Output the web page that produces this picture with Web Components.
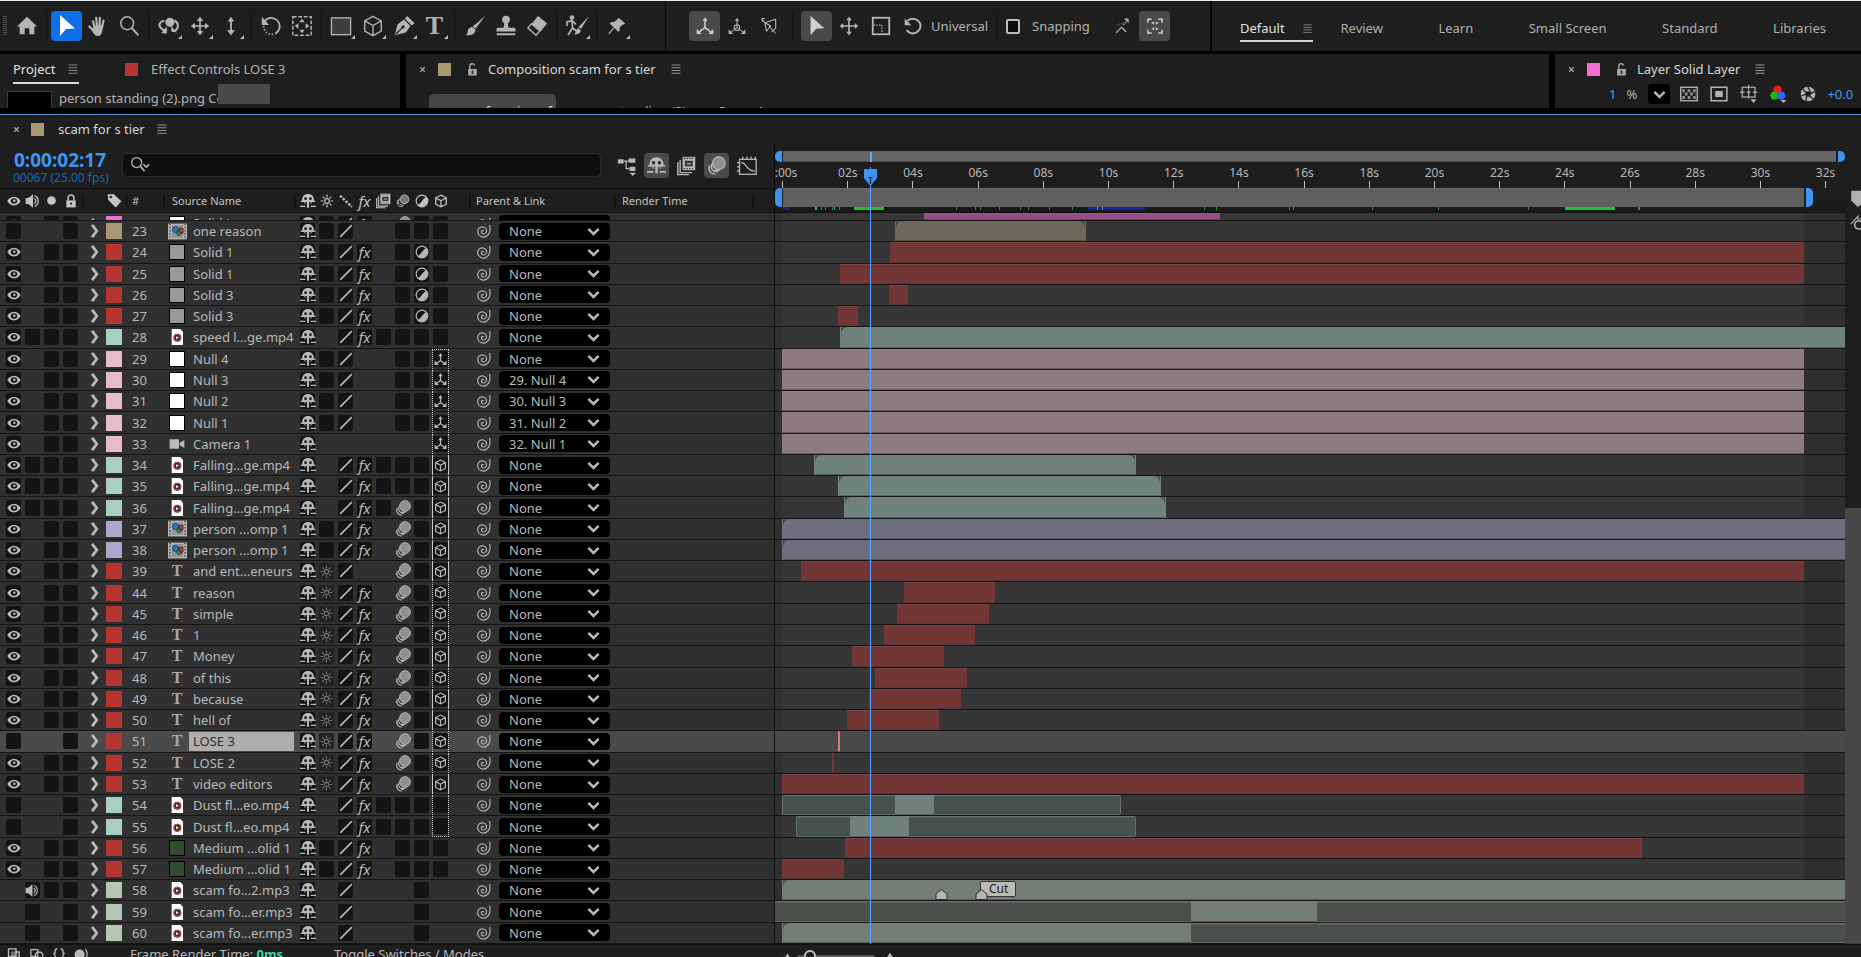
<!DOCTYPE html>
<html lang="en">
<head>
<meta charset="utf-8">
<title>scam for s tier</title>
<style>
html, body { margin: 0; height: 100%; overflow: hidden; background: #000; }
body { font: 13px/16px "Noto Sans", sans-serif; color: #b9b9b9; }
</style>
</head>
<body>
<editor-app></editor-app>
<script>
const line = (d, w = 1.6, extra = '') => `<path d="${d}" fill="none" stroke="currentColor" stroke-width="${w}" ${extra}/>`;
const fill = (d, extra = '') => `<path d="${d}" ${extra}/>`;
const ICONS = {
  home: fill('M12 2L1 12.500h3V21h5.500v-6.500h5V21H20v-8.500h3z'),
  pointer: fill('M5 1v21l6-7 9-.5z'),
  hand: line('M6.500 7l2 7M10 3l1 10M14 3l-.3 10M18 6l-1.700 8M2.500 12.500L8 18', 2.4, 'stroke-linecap="round"') + fill('M7 12l10.500-1-1 7c-.5 3-2 5-4.500 5-3 0-4.500-2.500-6-5z'),
  magnifier: `<circle cx="10" cy="9" r="7" fill="none" stroke="currentColor" stroke-width="1.600"/>` + line('M15 14l7 8', 2.2),
  orbit: `<circle cx="13" cy="8" r="5"/>` + line('M7 6c-5 1-7 5-4 8 1.500 2 4 3 7 2.500M18 6c4 2 5 7 2 10-1 1-3 1.500-5 1', 2.200) + fill('M9.500 12.500v8l-6-1zM14.500 12v6l6 1z'),
  pan: line('M12 4v16M4 12h16', 2) + fill('M12 1l4 5H8zM12 23l4-5H8zM1 12l5-4v8zM23 12l-5-4v8z'),
  dolly: line('M12 4v16', 2.200) + fill('M12 1l4 5.500H8zM12 23l5-6H7z'),
  rotate: line('M5 6.500C11 0 21 4 21.500 12c0 4-2 6.500-5 8.500', 2) + line('M4 12c0 5 4 10 11 9', 2, 'stroke-dasharray="1.500 2"') + fill('M2 2v9h8z'),
  behind: `<rect x="2" y="2" width="20" height="20" fill="none" stroke="currentColor" stroke-width="1.600" stroke-dasharray="4 2"/>` + fill('M12 4l3 4H9zM12 20l3-4H9zM4 12l4-3v6zM20 12l-4-3v6z'),
  rect: `<rect x="1.500" y="3" width="20" height="17.500" fill="#3d3d3d" stroke="currentColor" stroke-width="1.400"/>`,
  cube: line('M12 1.500l9 5v11l-9 5-9-5v-11zM3 6.500l9 5 9-5M12 11.500v11', 1.500),
  pen: fill('M2 22l3-12 7-5 7 7-5 7zM13 4l2.500-3 8 8L20.500 11.500z') + '<path d="M3 21l7-7" stroke="#1e1e1e" stroke-width="1.300"/><circle cx="11" cy="13" r="1.700" fill="#1e1e1e"/>',
  brush: fill('M23 1L12.500 15l-3-2.500zM9 13l3.500 3c0 4-4 7-11 6 3-1.500 2-3 3-6 .7-2 3-3 4.500-3z'),
  stamp: `<circle cx="12" cy="5" r="4.300"/>` + fill('M10.300 8h3.400l1 6H21c1 0 1.500 1 1.500 4h-21c0-3 .5-4 1.500-4h6.300zM2 20h20v2H2z'),
  eraser: fill('M13 1l10 8-7 9-10-8z') + line('M6 9.500l9 8-4 4.500-9-8z', 1.500),
  roto: `<circle cx="7" cy="3.500" r="2.300"/>` + line('M7 6l.5 8L3 21M7.500 14l4 3M2 12V8l5-1.500 4 4', 1.700) + fill('M24 2l-8 13-2.500-2zM13 14l3 2.500c-1 3-3.500 4-7 4 2-1 1.500-5 4-6.500z'),
  pin: fill('M14 2l8 7-2 1.500-1-.5-4 4c1 3 0 4-1.500 5L9 14.500 2.500 22 1.500 21 8 13.500 3 9c1.500-1.500 3-2 5-1.500L12.500 4z'),
  axes: line('M12 5v9L5 19M12 14l7 5', 1.800) + fill('M12 1.500l3 4.500H9zM2 15.500V21.500h6zM22 15.500V21.500h-6z'),
  axesWorld: line('M12 5v9L5 19M12 14l7 5', 1.200) + `<circle cx="12" cy="14" r="3.400" fill="none" stroke="currentColor" stroke-width="1.300"/>` + fill('M12 2l2.500 4h-5zM2 16v5.500h5.500zM22 16v5.500h-5.500z'),
  axesSmall: line('M12 5v9L5 19M12 14l7 5', 2.200) + fill('M12 0l4 6H8zM1 14v8h8zM23 14v8h-8z'),
  axesView: line('M3 3l4 5M7 8l13-4v11l-5 4M7 8l2 10 5-6zM12 12l8 9M4 3v4M3 3h4', 1.300),
  move: line('M12 3v18M3 12h18', 2) + fill('M12 1l3.500 4h-7zM12 23l3.500-4h-7zM1 12l4-3.500v7zM23 12l-4-3.500v7z'),
  scale: `<rect x="3" y="3" width="18" height="18" fill="none" stroke="currentColor" stroke-width="2"/>` + line('M4 11h9v10', 1.300, 'stroke-dasharray="1.500 1.500"'),
  redo: line('M5 6C11 0 21 5 21 12c0 5-5 9-9 9-4 0-6-2-7.500-4', 2.300) + fill('M2 3v8h8z'),
  snapLine: line('M5 20l7-7 6 6', 1.600) + line('M6 10l11-3', 1.200, 'stroke-dasharray="1 2"') + line('M14 10l6-6', 1.500, 'stroke-dasharray="2 1.500"') + fill('M21 2v6l-6-6z'),
  snapBox: line('M8 4H3.500v4M16 4h4.500v4M8 20.500H3.500v-4M16 20.500h4.500v-4', 1.800) + fill('M7.500 8l3.500-1v3.500zM16.500 8L13 7v3.500zM7.500 16l3.500 1v-3.500zM16.500 16l-3.500 1v-3.500z'),
  menu: line('M3 4h18M3 9.500h18M3 15h18M3 20.500h18', 1.700),
  close: line('M6 6l12 12M18 6L6 18', 3),
  lock: fill('M4 11h16v12H4z') + line('M7 11V7c0-7 10-7 10 0v4', 2.600) + '<circle cx="12" cy="16.500" r="1.800" fill="#1e1e1e"/>',
  unlock: fill('M4 11h16v12H4z') + line('M7 11V6c0-6 8-6 9-1', 2.400) + '<path d="M10.500 14h3v6h-3z" fill="#1e1e1e"/>',
  search: `<circle cx="8" cy="9" r="6" fill="none" stroke="currentColor" stroke-width="1.500"/>` + line('M12.500 13.500l5 6', 2) + line('M16 11l3.500 3.500L23 11', 1.800),
  down: line('M2.500 7l9.500 9.500L21.500 7', 4.500),
  right: line('M7 1.500l8 10.500-8 10.500', 4.800),
  eye: fill('M12 4.500C6 4.500 2.500 8.500.5 12c2 3.500 5.500 7.500 11.500 7.500S21.500 15.500 23.500 12c-2-3.500-5.500-7.500-11.500-7.500zm0 2.700c3.500 0 5.500 2 5.500 4.800s-2 4.800-5.500 4.800S6.500 14.800 6.500 12 8.500 7.200 12 7.200z', 'fill-rule="evenodd"') + '<circle cx="12.500" cy="11.500" r="2.200"/>',
  audio: fill('M1 7.500h4L12 2v20l-7-5.500H1z') + line('M14 8c3 2 3 6 0 8M14.500 4c7 3 7 13 0 16', 1.900),
  dot: '<circle cx="12" cy="12" r="8"/>',
  tag: fill('M1 2h10l12 11-9 10L2 11zM6 4.500a2 2 0 100 4 2 2 0 000-4z', 'fill-rule="evenodd"'),
  shy: fill('M3 12C3 5 6.500 1.500 12 1.500S21 5 21 12z') + '<ellipse cx="8.300" cy="8.500" rx="2" ry="2.200" fill="#1c1c1c"/><ellipse cx="15.700" cy="8.500" rx="2" ry="2.200" fill="#1c1c1c"/>' + line('M1 12.500h22', 2) + line('M12 12v10', 3) + line('M0 20h8M16 20h8', 2) + line('M7.500 13v3M16.500 13v3', 1.500),
  sun: `<circle cx="12" cy="12" r="4" fill="none" stroke="currentColor" stroke-width="2"/>` + line('M12 1v5M12 18v5M1 12h5M18 12h5M4.500 4.500l3 3M16.500 16.500l3 3M19.500 4.500l-3 3M4.500 19.500l3-3', 2),
  slash: line('M2 22L22 2', 2.800),
  quality: line('M2 3L22 22', 4, 'stroke-dasharray="4 2.500"'),
  blend: fill('M7 1h16v17H7z') + line('M4 5v16h15M1 8v15.500h14', 1.800) + '<path d="M8.500 3h13M8.500 16h13" stroke="#222" stroke-width="1.300" stroke-dasharray="1.800 1.500"/><path d="M10 6h10v7H10z" fill="#333"/><path d="M12.500 9h5v1.500h-5z"/>',
  blur: '<circle cx="15" cy="9" r="8" fill="#8f8f8f" stroke="currentColor" stroke-width="1.500"/>' + line('M6.500 9.500c-3 5 1 11 7 10.500M3.500 12c-3 5 1.500 11 7 10.500M9.500 17.500c2 1 5 1 7 0', 1.700),
  blurOutline: '<circle cx="14.500" cy="9" r="7.500" fill="#777" stroke="currentColor" stroke-width="1.500"/>' + line('M5.500 8c-3.500 6 1 12.500 8 11M2.500 11c-2 6 3 12 9 10.500', 1.600),
  adjust: '<circle cx="12" cy="12" r="10" fill="none" stroke="currentColor" stroke-width="2"/>' + fill('M19 4.500A10.500 10.500 0 014.500 19.500L10 14.500 14 9.500z'),
  cube3d: line('M12 2l9 4.500v11L12 22l-9-4.500v-11zM3 6.500l9 5 9-5M12 11.500V22', 2.200),
  spiral: line('M13 12.500c0-2-3-2-3.500.5-.5 3 3.500 4.500 6 2.500 3.500-3 2-8.500-3-9.500C6.500 5 3.500 9.500 4 14c1 6 8 9 13 6 5-3 6.500-9 5-17', 1.700),
  flow: fill('M1 4h7v5H1zM14 3h8v5h-8zM15 13h7v5h-7zM15 20h8l-4 4z') + line('M8 6h6M11 6v9h4', 1.500),
  graph: `<rect x="3" y="4" width="20" height="18" fill="none" stroke="currentColor" stroke-width="1.500"/>` + line('M5 8c7 0 6 10 16 10M0 8h3M0 13h3M0 18h3M7 1v3M12 1v3M17 1v3M22 1v3', 1.600),
  camera: fill('M1 5h14v14H1zM16 10l7-4v12l-7-4z'),
  file: '<path d="M4 0h13l4 4v20H4z" fill="#fff"/><circle cx="12.500" cy="13" r="6" fill="#3b2530"/><circle cx="12.500" cy="13" r="5" fill="none" stroke="#c9693d" stroke-width="1.200"/><path d="M10.500 10.500v5l4.500-2.500z" fill="#dfe8ff"/>',
  comp: '<path d="M0 2h24v20H0z" fill="#b4b4b4"/><path d="M2.500 2v20M21.500 2v20" stroke="#555" stroke-width="2" stroke-dasharray="2 2"/><path d="M5 4h14v16H5z" fill="#8c9499"/><circle cx="9.500" cy="9.500" r="3.800" fill="#267ac4" stroke="#15324d"/><circle cx="14" cy="14" r="3" fill="#38945a" stroke="#173524"/><path d="M14 8h5v6h-4z" fill="#c24133" stroke="#4a1512"/>',
  checker: `<rect x="1" y="3" width="22" height="18" fill="none" stroke="currentColor" stroke-width="1.800"/>` + line('M3 7.500h18M6.500 12h15M3 16.500h18', 4, 'stroke-dasharray="3.600 3.600" opacity=".75"'),
  mask: `<rect x="1.500" y="3" width="21" height="18" fill="none" stroke="currentColor" stroke-width="2"/><rect x="7" y="8" width="10" height="8"/>`,
  region: `<rect x="3" y="3" width="17" height="13" fill="none" stroke="currentColor" stroke-width="1.600"/>` + line('M11.500 0v6M11.500 12v6M0 9.500h6M17 9.500h6M9 9.500h5M11.500 7v5', 1.500) + fill('M14 19h8l-4 5z'),
  rgb: '<circle cx="10" cy="6" r="5.500" fill="#f01810"/><circle cx="6" cy="14" r="5.500" fill="#18b818"/><circle cx="15" cy="14" r="5.500" fill="#3565f0"/>' + fill('M14 20h8l-4 4z'),
  aperture: '<circle cx="12" cy="12" r="11"/><circle cx="12" cy="12" r="4" fill="#1e1e1e"/><path d="M12 1l4 9M22 8l-8 5M20 20l-7-6M9 23l1-9M2 15l8-3M4 4l6 7" stroke="#1e1e1e" stroke-width="2"/>',
  bin: fill('M3 1h18v13l-9 9-9-9z'),
  mountains: fill('M0 21l6-8 3 3 6-9 9 14z'),
  key: line('M1 14L12 2v7', 1.800) + `<circle cx="13" cy="15" r="6" fill="none" stroke="currentColor" stroke-width="2.500"/>` + fill('M14 5h10v12h-5z'),
  collapse: line('M4 3h12v12H4zM8 15v6h13V8h-5', 2.200) + fill('M8 7h9v10H8z', 'opacity=".5"'),
  rings: line('M3 4h11v11H3z', 2) + '<circle cx="16" cy="14" r="6" fill="none" stroke="currentColor" stroke-width="2.200"/>',
  braces: line('M9 3c-4 0-4 3-4 8H2c4 0 3 8 6 8M15 3c4 0 4 3 4 8h3c-4 0-3 8-6 8', 2.200),
  render: '<circle cx="9" cy="12" r="8"/>' + line('M18 3c4 4 4 12 0 17', 2)
};

class AeIcon extends HTMLElement {
  connectedCallback() {
    if (!this.shadowRoot) this.attachShadow({ mode: 'open' });
    const s = this.getAttribute('size') || 16;
    this.shadowRoot.innerHTML = `<style>:host{display:inline-flex;flex:none;width:${s}px;height:${s}px}svg{display:block;width:100%;height:100%;overflow:visible;fill:currentColor}</style><svg viewBox="0 0 24 24" aria-hidden="true">${ICONS[this.getAttribute('name')]}</svg>`;
  }
}
const icon = (name, size = 16) => `<ae-icon name="${name}" size="${size}"></ae-icon>`;

class View extends HTMLElement {
  connectedCallback() {
    if (this.shadowRoot) return;
    this.attachShadow({ mode: 'open' }).innerHTML = `<style>*{box-sizing:border-box}button{font:inherit;color:inherit;background:none;border:0;padding:0;margin:0}${this.css()}</style>${this.html()}`;
  }
}

class ToolBar extends View {
  css() { return `
    :host{display:flex;flex:none;height:51px;background:#1e1e1e;border-top:1px solid #e6efeb;color:#b4b4b4}
    nav{display:flex;align-items:center;width:666px;padding-left:3px;border-right:1px solid #0b0b0b}
    .grip{width:4px;height:20px;background:repeating-linear-gradient(#555 0 1px,transparent 1px 2px)}
    button{position:relative;display:flex;align-items:center;justify-content:center;width:31px;height:30px;border-radius:4px}
    .home{margin-left:4px}
    .more::after{content:"";position:absolute;right:2px;bottom:2px;border:2px solid transparent;border-right-color:#bbb;border-bottom-color:#bbb}
    .on{background:#4a4a4a;color:#d0d0d0}.blue{background:#0f6fe8;color:#fff}
    i{width:1px;height:28px;background:#111;margin:0 4px}
    .t{font:26px/24px "Liberation Serif",serif;font-weight:bold}
    .axis{width:546px;padding-left:23px;gap:1px;border-right:2px solid #050505}
    .axis i{margin:0 7px}
    span,label{white-space:nowrap}
    .axis span{width:58px;margin-left:2px}
    label{display:flex;align-items:center;gap:12px;width:99px}
    input{appearance:none;width:14px;height:15px;margin:0;border:2px solid #bdbdbd;border-radius:2px;background:#0c0c0c}
    .last{margin-left:1px}
    .spaces{flex:1;width:auto;border:0;justify-content:space-between;padding:4px 35px 0 28px}
    a{color:#b0b0b0;text-decoration:none;display:flex;align-items:center;height:28px;white-space:nowrap}
    a.cur{color:#e2e2e2;border-bottom:2px solid #d4d4d4;padding-top:2px;justify-content:space-between;width:73px;margin-right:-28px}
    a.cur ae-icon{color:#999}`; }
  html() {
    const b = (n, l, c = '', s = 22) => `<button type="button" class="${c}" aria-label="${l}">${icon(n, s)}</button>`;
    return `<nav aria-label="Tools"><div class="grip"></div>${b('home', 'Home', 'home', 22)}<i></i>
    ${b('pointer', 'Selection', 'blue', 24)}${b('hand', 'Hand')}${b('magnifier', 'Zoom')}<i></i>
    ${b('orbit', 'Orbit camera', 'more')}${b('pan', 'Pan camera', 'more', 20)}${b('dolly', 'Dolly camera', 'more', 20)}<i></i>
    ${b('rotate', 'Rotation')}${b('behind', 'Pan behind')}<i></i>
    ${b('rect', 'Rectangle', 'more', 23)}${b('cube', '3D shape', 'more')}${b('pen', 'Pen', 'more')}<button type="button" class="more t">T</button><i></i>
    ${b('brush', 'Brush')}${b('stamp', 'Clone stamp')}${b('eraser', 'Eraser')}<i></i>${b('roto', 'Roto brush', 'more', 24)}<i></i>${b('pin', 'Puppet pin', 'more', 20)}</nav>
    <nav class="axis" aria-label="Axis modes">${b('axes', 'Local axis', 'on', 20)}${b('axesWorld', 'World axis', '', 20)}${b('axesView', 'View axis', '', 20)}<i></i>
    ${b('pointer', 'Universal', 'on', 22)}${b('move', 'Move', '', 20)}${b('scale', 'Scale', '', 22)}${b('redo', 'Rotate', '', 20)}<span>Universal</span><i></i>
    <label><input type="checkbox">Snapping</label>${b('snapLine', 'Snap to edges', '', 19)}${b('snapBox', 'Snap to features', 'on last', 20)}</nav>
    <nav class="spaces" aria-label="Workspaces"><a class="cur" href="#default">Default${icon('menu', 11)}</a><a href="#review">Review</a><a href="#learn">Learn</a><a href="#small">Small Screen</a><a href="#standard">Standard</a><a href="#libraries">Libraries</a></nav>`;
  }
}

class ColorSwatch extends View {
  css() { return `:host{display:block;flex:none;width:13px;height:13px;background:${this.getAttribute('color')}}`; }
  html() { return ''; }
}

class PanelRow extends View {
  css() { return `
    :host{display:flex;flex:none;gap:6px;height:54px;margin:3px 0 6px;color:#b4b4b4}
    section{background:#1e1e1e;overflow:hidden;white-space:nowrap}
    .project{flex:0 0 400px}.comp{flex:1;min-width:0}.layer{flex:0 0 306px}
    header{display:flex;align-items:center;height:30px}
    .tab{display:flex;align-items:center;justify-content:space-between;width:66px;height:27px;margin:2px 46px 0 13px;border-bottom:2px solid #ddd;color:#e0e0e0}
    .tab ae-icon{color:#999}
    .project color-swatch{margin-right:13px}
    .comp header,.layer header{padding-left:12px;color:#d8d8d8}
    header ae-icon{color:#aaa}
    .gap{display:flex;margin:0 15px 0 11px}
    .title{margin:0 14px 0 9px}
    .item{display:flex;align-items:flex-start;padding-left:7px}
    .thumb{width:45px;height:18px;margin:7px 7px 0 0;background:#000;border:1px solid #3a3a3a}
    .name{width:159px;overflow:hidden;padding-top:6px}
    .chip{width:52px;height:20px;background:#4a4a4a}
    .crumbs{display:flex;padding:10px 0 0 23px}
    .crumbs button{width:127px;height:34px;border-radius:5px;background:#474747;text-align:right;padding-right:4px;margin-right:12px;color:#ddd}
    .crumbs span{padding-top:9px}
    .opts{display:flex;align-items:center;height:20px;padding-left:54px}
    .opts b{font-weight:normal;color:#4a9cf0}
    .opts span{width:19px;margin:0 3px 0 10px}
    .opts .dd{display:flex;align-items:center;justify-content:center;width:22px;height:20px;background:#000;border-radius:3px;margin-right:10px}
    .opts .ic{display:flex;width:30px}
    .opts .ap{width:27px}`; }
  html() { return `
    <section class="project"><header><div class="tab">Project${icon('menu', 12)}</div><color-swatch color="#b33632"></color-swatch>Effect Controls LOSE 3</header>
    <div class="item"><div class="thumb"></div><div class="name">person standing (2).png Co</div><div class="chip"></div></div></section>
    <section class="comp"><header>${icon('close', 9)}<span class="gap"><color-swatch color="#a89873"></color-swatch></span>${icon('unlock', 13)}<span class="title">Composition scam for s tier</span>${icon('menu', 12)}</header>
    <div class="crumbs"><button type="button">function of</button><span>person standing (2).png Comp 1</span></div></section>
    <section class="layer"><header>${icon('close', 9)}<span class="gap"><color-swatch color="#f06fd0"></color-swatch></span>${icon('unlock', 13)}<span class="title">Layer Solid Layer</span>${icon('menu', 12)}</header>
    <div class="opts"><b>1</b><span>%</span><button type="button" class="dd" aria-label="Magnification">${icon('down', 13)}</button>
    <div class="ic">${icon('checker', 18)}</div><div class="ic">${icon('mask', 18)}</div><div class="ic">${icon('region', 18)}</div><div class="ic">${icon('rgb', 18)}</div><div class="ic ap">${icon('aperture', 16)}</div><b>+0.0</b></div></section>`; }
}

const C = {
  red: ['#b33632', '#733636', '#8b4a45'], sand: ['#a89873', '#70685a', '#4c483f'], mint: ['#a9cfc5', '#6f827d', '#46524e'],
  pink: ['#e6bccb', '#8e7b80', '#6a5c60'], lav: ['#aaa8cd', '#6f6e7e', '#474650'], sage: ['#b3c9b4', '#757e74', '#4c4f4b'], mag: ['#f06fd0', '#954f85', '#6a3a60']
};
const T = 'e.bb', TX = 'so/f.mbc', S = 'sb/f.bab', N = 'sb/..bbx';
// number, label, source icon, name, a/v switches, layer switches, parent, [start, end, kind] bars on a 1070-unit view, column outline
const LAYERS = [
  [22, 'mag', 'white', 'Solid Layer', T, 'sb/f.mbb', 'None', [[149, 445]]],
  [23, 'sand', 'comp', 'one reason', 'b..b', 'sb/..bbb', 'None', [[120, 311, 'both']]],
  [24, 'red', 'grey', 'Solid 1', T, S, 'None', [[115, 1029]]],
  [25, 'red', 'grey', 'Solid 1', T, S, 'None', [[65, 1029]]],
  [26, 'red', 'grey', 'Solid 3', T, S, 'None', [[114, 133]]],
  [27, 'red', 'grey', 'Solid 3', T, S, 'None', [[63, 83]]],
  [28, 'mint', 'file', 'speed l...ge.mp4', 'ebbb', 's./fbbbb', 'None', [[65, 1070, 'start']]],
  [29, 'pink', 'white', 'Null 4', T, N, 'None', [[7, 1029]], 'dot top'],
  [30, 'pink', 'white', 'Null 3', T, N, '29. Null 4', [[7, 1029]], 'dot'],
  [31, 'pink', 'white', 'Null 2', T, N, '30. Null 3', [[7, 1029]], 'dot'],
  [32, 'pink', 'white', 'Null 1', T, N, '31. Null 2', [[7, 1029]], 'dot'],
  [33, 'pink', 'camera', 'Camera 1', T, 's......x', '32. Null 1', [[7, 1029]], 'dot'],
  [34, 'mint', 'file', 'Falling...ge.mp4', 'ebbb', 's./fbbbc', 'None', [[39, 361, 'both']], 'solid'],
  [35, 'mint', 'file', 'Falling...ge.mp4', 'ebbb', 's./fbbbc', 'None', [[63, 386, 'both']], 'solid'],
  [36, 'mint', 'file', 'Falling...ge.mp4', 'ebbb', 's./fbmbc', 'None', [[69, 391, 'both']], 'solid'],
  [37, 'lav', 'comp', 'person ...omp 1', T, 'sb/f.mbc', 'None', [[7, 1070, 'start']], 'solid'],
  [38, 'lav', 'comp', 'person ...omp 1', T, 'sb/f.mbc', 'None', [[7, 1070, 'start']], 'solid'],
  [39, 'red', 'text', 'and ent...eneurs', T, 'so/..mbc', 'None', [[26, 1029]], 'solid'],
  [44, 'red', 'text', 'reason', T, TX, 'None', [[129, 220]], 'dot'],
  [45, 'red', 'text', 'simple', T, TX, 'None', [[122, 214]], 'dot'],
  [46, 'red', 'text', '1', T, TX, 'None', [[109, 200]], 'dot'],
  [47, 'red', 'text', 'Money', T, TX, 'None', [[77, 169]], 'solid'],
  [48, 'red', 'text', 'of this', T, TX, 'None', [[100, 192]], 'dot'],
  [49, 'red', 'text', 'because', T, TX, 'None', [[94, 186]], 'solid'],
  [50, 'red', 'text', 'hell of', T, TX, 'None', [[72, 164]], 'solid'],
  [51, 'red', 'text', 'LOSE 3', 'b..b', TX, 'None', [[63, 65, 'hot']], 'dot'],
  [52, 'red', 'text', 'LOSE 2', T, TX, 'None', [[57, 59]], 'dot'],
  [53, 'red', 'text', 'video editors', T, TX, 'None', [[7, 1029]], 'solid'],
  [54, 'mint', 'file', 'Dust fl...eo.mp4', 'b..b', 's./fbbbb', 'None', [[7, 120, 'dim first'], [120, 159], [159, 346, 'dim last']], 'dot'],
  [55, 'mint', 'file', 'Dust fl...eo.mp4', 'b..b', 's./fbbbb', 'None', [[21, 75, 'dim first'], [75, 134], [134, 361, 'dim last']], 'dot bottom'],
  [56, 'red', 'green', 'Medium ...olid 1', T, 'sb/f.bbb', 'None', [[70, 867]]],
  [57, 'red', 'green', 'Medium ...olid 1', T, 'sb/f.bbb', 'None', [[7, 69]]],
  [58, 'sage', 'file', 'scam fo...2.mp3', '.abb', 's./...b.', 'None', [[7, 1070, 'start']]],
  [59, 'sage', 'file', 'scam fo...er.mp3', '.b.b', 's./...b.', 'None', [[0, 416, 'dim'], [416, 542], [542, 1070, 'dim']]],
  [60, 'sage', 'file', 'scam fo...er.mp3', '.b.b', 's./...b.', 'None', [[7, 416, 'start'], [416, 1070, 'dim']]]
];
const SELECTED = 51;

class LayerTable extends View {
  css() { return `
    :host{display:block;min-height:0;color:#b9b9b9}
    table{display:grid;grid-template-rows:25px minmax(0,1fr);height:100%}
    thead,tbody{display:grid}
    tbody{grid-template-rows:8px repeat(34,minmax(0,1fr));min-height:0}
    tr{display:grid;grid-template-columns:15px 15px 15px 15px 20px 16px 39px 16px 107px repeat(8,15px) 43px 111px 1fr;column-gap:4px;padding-left:6px;align-items:center;min-height:0}
    tbody tr{background:#303030;border-bottom:1px solid #151515}
    tbody tr:first-child{overflow:hidden;align-items:end}
    tbody tr.sel{background:#4a4a4a}
    th,td{display:flex;align-items:center;justify-content:center;padding:0;white-space:nowrap;font-weight:normal;min-width:0}
    thead tr{background:#1e1e1e;border-top:1px solid #111;border-bottom:1px solid #111}
    thead th{height:22px;font-size:11px;color:#c4c4c4}
    thead .l{justify-content:flex-start;border-left:2px solid #131313;height:14px}
    .hn{padding-left:4px}.hs{grid-column:8/10;margin:0 0 0 -6px;padding-left:7px;border-right:2px solid #131313}
    .hp{grid-column:18/20;margin-left:17px;padding-left:5px}.hr{width:140px;padding-left:6px;border-right:2px solid #131313}
    thead .hc{border-left:2px solid #131313;height:14px}
    button{display:flex;align-items:center;justify-content:center;width:15px;height:16px;border-radius:2px}
    .box{background:#141414}.dimsun{color:#777;background:#222}
    button.fx,thead th.fx{font:italic 15px/16px "Noto Sans",sans-serif}
    .exp{justify-content:flex-end}
    .num{justify-content:flex-start;padding-left:6px}
    .name{justify-content:flex-start;padding-left:4px;height:19px}
    .sel .name{background:#adadad;color:#303030;margin-right:2px}
    .t{font:bold 16px/16px "Liberation Serif",serif;color:#a8a8a8}
    .src{width:16px;height:16px;border:1px solid #000}
    .out{align-self:stretch;margin:0 -1px;border:0 dotted #c8c8c8;border-width:0 1px}
    .out.solid{border-style:solid}.out.top{border-top-width:1px}.out.bottom{border-bottom-width:1px}
    .whip{justify-content:flex-end;padding-right:4px}
    .par{position:relative}
    select{appearance:none;width:111px;height:17px;font:inherit;line-height:16px;color:inherit;background:#000;border:0;border-radius:4px;padding:0 24px 0 10px;margin:0}
    .par ae-icon{position:absolute;right:10px;top:2px;pointer-events:none}`; }
  cell(c) {
    const box = (i, l, k = 'box') => `<button type="button" class="${k}" aria-label="${l}">${i}</button>`;
    switch (c) {
      case 'e': return box(icon('eye', 14), 'Video');
      case 'a': return box(icon('audio', 15), 'Audio');
      case 'b': return box('', 'Switch');
      case 's': return box(icon('shy', 16), 'Shy');
      case 'o': return box(icon('sun', 13), 'Collapse', 'dimsun');
      case '/': return box(icon('slash', 14), 'Quality');
      case 'f': return `<button type="button" class="box fx">fx</button>`;
      case 'm': return box(icon('blur', 16), 'Motion blur', '');
      case 'a2': return box(icon('adjust', 14), 'Adjustment layer');
      case 'c': return box(icon('cube3d', 13), '3D layer');
      case 'x': return box(icon('axesSmall', 13), '3D layer');
      default: return '';
    }
  }
  source(k) {
    const solid = { white: '#fff', grey: '#999', green: '#314c2e' }[k];
    if (solid) return `<span class="src" style="background:${solid}"></span>`;
    return k === 'text' ? '<span class="t">T</span>' : icon(k, { comp: 19, file: 16, camera: 16 }[k]);
  }
  html() {
    const th = n => `<th>${icon(n, 14)}</th>`;
    const rows = LAYERS.map(([n, lab, src, name, av, sw, par, , out]) => `<tr class="${n === SELECTED ? 'sel' : ''}">
      ${[...av].map(c => `<td>${this.cell(c)}</td>`).join('')}<td class="exp">${icon('right', 14)}</td><td><color-swatch style="width:16px;height:16px" color="${C[lab][0]}"></color-swatch></td><td class="num">${n}</td><td>${this.source(src)}</td><td class="name">${name}</td>
      ${[...sw].map((c, i) => `<td class="${i === 7 && out ? 'out ' + out : ''}">${this.cell(i === 6 && c === 'a' ? 'a2' : c)}</td>`).join('')}
      <td class="whip">${icon('spiral', 16)}</td><td class="par"><select aria-label="Parent of layer ${n}"><option>${par}</option></select>${icon('down', 13)}</td><td></td></tr>`).join('');
    return `<table><thead><tr><th>${icon('eye', 14)}</th><th>${icon('audio', 16)}</th><th>${icon('dot', 13)}</th><th>${icon('lock', 14)}</th><th class="hc"></th><th>${icon('tag', 15)}</th><th class="l hn">#</th><th class="l hs">Source Name</th>
      <th>${icon('shy', 16)}</th>${th('sun')}${th('quality')}<th class="fx">fx</th><th>${icon('blend', 15)}</th>${th('blurOutline')}${th('adjust')}${th('cube3d')}<th class="l hp">Parent &amp; Link</th><th class="l hr">Render Time</th></tr></thead><tbody>${rows}</tbody></table>`;
  }
}

const UNITS = 1070;
const pct = n => `calc(100% * ${n} / ${UNITS})`;
const flowBars = (list, paint) => {
  let at = 0;
  return list.map(([a, b, kind = '']) => {
    const s = `<span class="${kind}" style="margin-left:${pct(a - at)};width:${pct(b - a)};${paint(kind)}"></span>`;
    at = b; return s;
  }).join('');
};

class TimeRuler extends View {
  css() { return `
    :host{display:block;height:70px;padding-top:8px;background:#1e1e1e;font-size:12px}
    .nav,.work{display:flex}
    .nav{height:11px}.work{height:19px}
    .nav b,.work b{flex:none;background:#3f93f2;width:7px}
    .nav b:first-child,.work b:first-child{border-radius:5px 0 0 5px;margin-right:1px}
    .nav b:last-child,.work b:last-child{border-radius:0 5px 5px 0;margin-left:2px}
    .nav p{flex:1;margin:0;background:#666;border-bottom:1px solid #4d4d4d}
    .work p{flex:none;margin:0;background:#606060;border-top:1px solid #6a6a6a;width:${pct(1021)}}
    .labels{display:flex;height:26px;overflow:hidden;color:#b8b8b8}
    .labels div{flex:none;display:flex;flex-direction:column;align-items:center;justify-content:space-between;width:calc(100% * 652 / 10700);padding-top:3px}
    .labels div:first-child{margin-left:${pct(-25)}}
    .labels i{width:1px;height:7px;background:#c0c0c0}
    .cache{display:flex;height:6px;padding-bottom:2px;background:#191919;border-bottom:1px solid #111}
    .cache span{flex:none;min-width:1px}`; }
  html() {
    const g = '#1fa32a', c = '#35b59a', b = '#1522a8';
    const marks = [[8, 15, '#25256a'], [40, 42, c], [46, 47, g], [50, 51, g], [57, 58, g], [59, 60, c], [64, 65, g], [79, 109, '#1fc42c'], [181, 182, g], [200, 201, g], [205, 206, g], [224, 225, g], [245, 246, g], [253, 254, g], [274, 275, g], [297, 298, g], [313, 322, b], [322, 323, c], [323, 327, b], [327, 328, c], [328, 370, b], [429, 430, g], [441, 442, g], [514, 515, g], [518, 519, g], [597, 598, g], [663, 664, g], [753, 754, g], [790, 840, '#1fc42c'], [863, 865, g]];
    const labels = Array.from({ length: 17 }, (_, i) => `<div>${i ? String(i * 2).padStart(2, '0') + 's' : '0:00s'}<i></i></div>`).join('');
    return `<div class="nav"><b></b><p></p><b></b></div><div class="labels">${labels}</div><div class="work"><b></b><p></p><b></b></div><div class="cache">${flowBars(marks, k => 'background:' + k)}</div>`;
  }
}

class TrackArea extends View {
  css() { return `
    :host{display:grid;grid-template-rows:8px repeat(34,minmax(0,1fr));min-height:0}
    .row{display:flex;min-height:0;border-bottom:1px solid #151515;background:linear-gradient(90deg,#303030 ${pct(8)},#363636 ${pct(8)} ${pct(1029)},#2f2f2f ${pct(1029)})}
    .row.sel{background:#4a4a4a}
    .row>span{flex:none;background:var(--c);box-shadow:inset 0 -1px rgba(60,60,60,.5),inset 0 1px rgba(150,150,150,.15)}
    .row>.dim{background:var(--d);border:0 solid #66716d;border-width:1px 0}
    .row>.first{border-left-width:1px;border-radius:2px 0 0 2px}.row>.last{border-right-width:1px;border-radius:0 2px 2px 0}
    .row>.start,.row>.both{background:var(--d);border-left:1px solid var(--c)}
    .row>.both{border-right:1px solid var(--c)}
    .start::after,.both::after{content:"";display:block;height:100%;background:var(--c);border-top-left-radius:7px;box-shadow:inset 0 -1px rgba(60,60,60,.5)}
    .both::after{border-top-right-radius:7px}
    .row>.hot{background:#d97a70}
    .row.marks{position:relative}
    .mk{position:absolute;bottom:0;width:13px;height:11px;fill:#b5b8b2;stroke:#333;margin-left:-6px}
    .cut{position:absolute;top:1px;height:16px;width:36px;border:1px solid #333;border-radius:2px;background:#b9bcb7;color:#222;font-size:12px;line-height:14px;padding-left:8px}`; }
  html() {
    const mk = x => `<svg class="mk" style="left:${pct(x)}" viewBox="0 0 13 11"><path d="M1 10.500V5L6.500 .7 12 5v5.500z"/></svg>`;
    return LAYERS.map(([n, lab, , , , , , bars]) => `<div class="row ${n === SELECTED ? 'sel' : ''} ${n === 58 ? 'marks' : ''}" style="--c:${C[lab][1]};--d:${C[lab][2]}">${flowBars(bars, () => '')}${n === 58 ? `<div class="cut" style="left:${pct(205)}">Cut</div>${mk(166)}${mk(206)}` : ''}</div>`).join('');
  }
}

class TimelinePanel extends View {
  css() { return `
    :host{display:grid;grid-template-rows:28px minmax(0,1fr) 22px;flex:1;min-height:0;background:#1e1e1e;border-top:1px solid #4a8fcc}
    header{display:flex;align-items:center;padding-left:12px;color:#d6d6d6;white-space:nowrap}
    header color-swatch{margin:0 14px 0 10px}
    header ae-icon{color:#aaa}header span{margin-right:11px}
    .body{display:grid;grid-template-columns:775px minmax(0,1fr) 16px;min-height:0}
    .left{display:grid;grid-template-rows:45px minmax(0,1fr);border-right:1px solid #0c0c0c;min-height:0}
    .bar{display:flex;align-items:flex-start;padding:10px 0 0 13px}
    .time{width:109px;margin-top:-3px}
    .time b{display:block;font-size:19px;line-height:20px;color:#3f95f5;padding-left:1px}
    .time small{display:block;font-size:12px;line-height:16px;color:#1a67b4;white-space:nowrap}
    .search{display:flex;align-items:center;width:479px;height:24px;background:#0f0f0f;border:1px solid #2b2b2b;border-radius:5px;padding-left:7px;color:#b9b9b9;margin-right:13px}
    input{flex:1;background:none;border:0;color:inherit;font:inherit;outline:0}
    .bar button{display:flex;align-items:center;justify-content:center;width:25px;height:25px;border-radius:4px;margin-right:5px}
    .bar .on{background:#4a4a4a}
    .right{position:relative;display:grid;grid-template-rows:70px minmax(0,1fr);min-height:0}
    .head{position:absolute;top:24px;bottom:0;left:${pct(95)};width:1px;background:#55a4ff}
    .head svg{position:absolute;left:-7px;top:0;width:15px;height:19px}
    .tick{position:absolute;top:9px;height:10px;left:${pct(95)};width:2px;background:#6fa5df}
    .scroll{display:flex;flex-direction:column;align-items:center;color:#b0b0b0;overflow:hidden;padding-top:47px;background:linear-gradient(#484848,#484848) 0 100%/100% 54.4% no-repeat}
    .scroll ae-icon{margin:0 -6px 7px 4px}
    footer{display:flex;align-items:flex-start;background:#1e1e1e;border-top:1px solid #111;white-space:nowrap}
    .f1{display:flex;gap:8px;width:130px;padding:2px 0 0 6px}
    .f2{width:204px}.f2 b{color:#40d3a0}.f2,.f3{padding-top:1px}
    .f3{width:446px}
    .zoom{display:flex;padding-top:3px;gap:6px;align-items:center}
    input[type=range]{appearance:none;flex:none;width:76px;height:12px;margin:0}
    input[type=range]::-webkit-slider-runnable-track{height:2px;background:#555}
    input[type=range]::-webkit-slider-thumb{appearance:none;width:12px;height:12px;border:2px solid #c0c0c0;border-radius:50%;margin-top:-5px;background:#1e1e1e}`; }
  html() {
    const b = (n, l, c, s) => `<button type="button" class="${c}" aria-label="${l}">${icon(n, s)}</button>`;
    return `<header>${icon('close', 9)}<color-swatch color="#a89873"></color-swatch><span>scam for s tier</span>${icon('menu', 12)}</header>
    <div class="body"><div class="left"><div class="bar"><div class="time"><b>0:00:02:17</b><small>00067 (25.00 fps)</small></div>
    <div class="search">${icon('search', 20)}<input type="text" aria-label="Search layers"></div>
    ${b('flow', 'Flowchart', '', 20)}${b('shy', 'Hide shy layers', 'on', 19)}${b('blend', 'Frame blending', '', 19)}${b('blur', 'Motion blur', 'on', 19)}${b('graph', 'Graph editor', '', 20)}</div><layer-table></layer-table></div>
    <div class="right"><time-ruler></time-ruler><track-area></track-area><div class="tick"></div>
    <div class="head"><svg viewBox="0 0 15 19"><path d="M1 2h13v9l-6.500 8L1 11z" fill="#3f93f2"/><path d="M5.500 10.500h4M7.500 10v7" stroke="#123" stroke-width="1.200"/></svg></div></div>
    <div class="scroll">${icon('bin', 18)}${icon('key', 16)}</div></div>
    <footer><div class="f1">${icon('collapse', 15)}${icon('rings', 15)}${icon('braces', 14)}${icon('render', 15)}</div><div class="f2">Frame Render Time: <b>0ms</b></div><div class="f3">Toggle Switches / Modes</div>
    <div class="zoom">${icon('mountains', 12)}<input type="range" aria-label="Timeline zoom" value="10">${icon('mountains', 16)}</div></footer>`;
  }
}

class EditorApp extends View {
  css() { return `:host{display:flex;flex-direction:column;height:calc(100vh + 9px);background:#000}`; }
  html() { return `<tool-bar></tool-bar><panel-row></panel-row><timeline-panel></timeline-panel>`; }
}

customElements.define('ae-icon', AeIcon);
customElements.define('color-swatch', ColorSwatch);
customElements.define('tool-bar', ToolBar);
customElements.define('panel-row', PanelRow);
customElements.define('layer-table', LayerTable);
customElements.define('time-ruler', TimeRuler);
customElements.define('track-area', TrackArea);
customElements.define('timeline-panel', TimelinePanel);
customElements.define('editor-app', EditorApp);
</script>
</body>
</html>
